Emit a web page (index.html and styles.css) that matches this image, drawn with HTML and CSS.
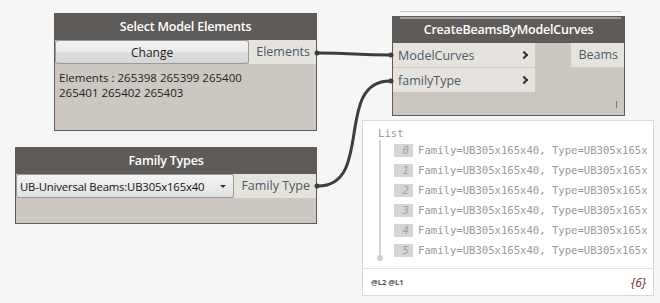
FILE: index.html
```html
<!DOCTYPE html>
<html lang="en">
<head>
    <meta charset="UTF-8">
    <title>Dynamo - Beams by model curves</title>
    <link rel="stylesheet" href="styles.css">
</head>
<body>
    <div class="canvas">
        <div class="node node-select">
            <div class="node-title">Select Model Elements</div>
            <div class="node-row">
                <button class="node-btn">Change</button>
                <div class="port-out">Elements</div>
            </div>
            <div class="node-info">Elements : 265398 265399 265400<br>265401 265402 265403</div>
        </div>

        <div class="node node-family">
            <div class="node-title">Family Types</div>
            <div class="node-row">
                <div class="dropdown">
                    <span>UB-Universal Beams:UB305x165x40</span>
                    <span class="caret"></span>
                </div>
                <div class="port-out">Family Type</div>
            </div>
        </div>

        <div class="node node-beams">
            <div class="node-title">CreateBeamsByModelCurves</div>
            <div class="beams-body">
                <div class="inputs">
                    <div class="port-in">ModelCurves <span class="chev"></span></div>
                    <div class="port-in">familyType <span class="chev"></span></div>
                </div>
                <div class="outputs">
                    <div class="port-out">Beams</div>
                </div>
            </div>
            <span class="lacing"></span>
        </div>

        <div class="preview">
            <div class="preview-list">
                <div class="list-title">List</div>
                <div class="list-items">
                    <div class="list-item"><span class="idx">0</span>Family=UB305x165x40, Type=UB305x165x</div>
                    <div class="list-item"><span class="idx">1</span>Family=UB305x165x40, Type=UB305x165x</div>
                    <div class="list-item"><span class="idx">2</span>Family=UB305x165x40, Type=UB305x165x</div>
                    <div class="list-item"><span class="idx">3</span>Family=UB305x165x40, Type=UB305x165x</div>
                    <div class="list-item"><span class="idx">4</span>Family=UB305x165x40, Type=UB305x165x</div>
                    <div class="list-item"><span class="idx">5</span>Family=UB305x165x40, Type=UB305x165x</div>
                </div>
            </div>
            <div class="preview-footer">
                <span class="levels">@L2 @L1</span>
                <span class="count">{6}</span>
            </div>
        </div>

        <svg class="wires" width="660" height="303" viewBox="0 0 660 303">
            <path d="M318 53 C 354 53, 354 55, 390 55" />
            <path d="M318 186 C 374 186, 334 81, 390 81" />
            <circle cx="317" cy="53" r="2.5" />
            <circle cx="391" cy="55" r="2.5" />
            <circle cx="317" cy="186" r="2.5" />
            <circle cx="391" cy="81" r="2.5" />
        </svg>
    </div>
</body>
</html>
```

FILE: styles.css
```css
* {
    margin: 0;
    padding: 0;
    box-sizing: border-box;
}

body {
    background: #f6f6f6;
    font-family: 'Open Sans', 'Noto Sans', sans-serif;
    color: #333;
}

.canvas {
    position: relative;
    width: 660px;
    height: 303px;
    overflow: hidden;
}

/* nodes sit on a free canvas, so they are placed by coordinates */
.node {
    position: absolute;
    background: #ccc8c1;
    border: 1px solid #5e5b58;
}

.node-select {
    left: 54px;
    top: 13px;
    width: 263px;
    height: 118px;
}

.node-family {
    left: 15px;
    top: 147px;
    width: 302px;
    height: 77px;
}

.node-beams {
    left: 392px;
    top: 16px;
    width: 233px;
    height: 100px;
}

.node-beams::before {
    content: '';
    position: absolute;
    left: 7px;
    right: 3px;
    top: -6px;
    height: 5px;
    border-top: 1px solid #c4c4c4;
    border-bottom: 2px solid #a09e9c;
}

.node-title {
    height: 26px;
    background: #5e5b58;
    color: #fff;
    font-size: 12.5px;
    font-weight: 600;
    line-height: 26px;
    text-align: center;
    letter-spacing: -0.2px;
}

.node-row {
    display: flex;
    height: 24px;
}

.node-btn {
    flex: 1;
    border: 1px solid #9c9a98;
    border-radius: 3px;
    background: linear-gradient(#f2f2f2 0%, #ebebeb 50%, #dddddd 51%, #d6d6d6 100%);
    font-family: inherit;
    font-size: 12px;
    color: #222;
}

.port-out {
    background: #e6e3df;
    color: #4d5a66;
    font-size: 12.5px;
    line-height: 24px;
    padding: 0 6px 0 7px;
    white-space: nowrap;
}

.node-info {
    padding: 6px 4px;
    font-size: 11.5px;
    line-height: 15px;
    color: #222;
}

.dropdown {
    flex: 1;
    display: flex;
    align-items: center;
    justify-content: space-between;
    padding: 0 7px 0 3px;
    border: 1px solid #9c9a98;
    border-radius: 3px;
    background: linear-gradient(#f4f4f4, #e2e2e2);
    font-size: 11.3px;
    letter-spacing: -0.15px;
    color: #111;
    white-space: nowrap;
}

.caret {
    width: 0;
    height: 0;
    border-left: 3px solid transparent;
    border-right: 3px solid transparent;
    border-top: 3px solid #333;
}

.beams-body {
    display: flex;
    justify-content: space-between;
}

.inputs {
    width: 142px;
}

.port-in {
    display: flex;
    justify-content: space-between;
    align-items: center;
    height: 25px;
    padding: 0 6px 0 5px;
    background: #e6e3df;
    border-bottom: 1px solid #ccc8c1;
    color: #4d5a66;
    font-size: 12.5px;
}

.chev {
    width: 6px;
    height: 6px;
    border-top: 2px solid #333;
    border-right: 2px solid #333;
    transform: rotate(45deg);
    margin-right: 2px;
}

.outputs .port-out {
    height: 24px;
}

.lacing {
    position: absolute;
    right: 7px;
    bottom: 7px;
    width: 1px;
    height: 7px;
    background: #777;
}

.preview {
    position: absolute;
    left: 362px;
    top: 120px;
    width: 292px;
    height: 176px;
    background: #fff;
    border: 1px solid #d9d9d9;
    display: flex;
    flex-direction: column;
}

.preview-list {
    flex: 1;
    padding: 6px 0 0 15px;
    overflow: hidden;
    font-family: 'DejaVu Sans Mono', 'Liberation Mono', monospace;
    font-size: 10.6px;
    color: #999;
}

.list-title {
    line-height: 13px;
}

.list-items {
    position: relative;
    margin-left: 1px;
    padding: 0 0 0 13px;
    border-left: 2px solid #d3d3d3;
    height: 118px;
}

.list-items::after {
    content: '';
    position: absolute;
    left: -4px;
    bottom: -3px;
    width: 6px;
    height: 6px;
    border-radius: 50%;
    background: #cfcfcf;
}

.list-item {
    display: flex;
    align-items: center;
    height: 20px;
    white-space: nowrap;
}

.idx {
    flex: none;
    width: 19px;
    height: 13px;
    margin-right: 5px;
    background: #d5d5d5;
    color: #a0a0a0;
    font-style: italic;
    text-align: right;
    padding-right: 4px;
    line-height: 13px;
}

.preview-footer {
    display: flex;
    justify-content: space-between;
    align-items: center;
    height: 27px;
    padding: 0 7px 0 8px;
    border-top: 1px solid #e3e3e3;
}

.levels {
    font-size: 7.5px;
    font-weight: bold;
    color: #555;
}

.count {
    font-size: 12px;
    font-style: italic;
    color: #6b2d2d;
}

.wires {
    position: absolute;
    left: 0;
    top: 0;
    pointer-events: none;
}

.wires path {
    fill: none;
    stroke: #3d3d3d;
    stroke-width: 3;
}

.wires circle {
    fill: #3d3d3d;
}
```
